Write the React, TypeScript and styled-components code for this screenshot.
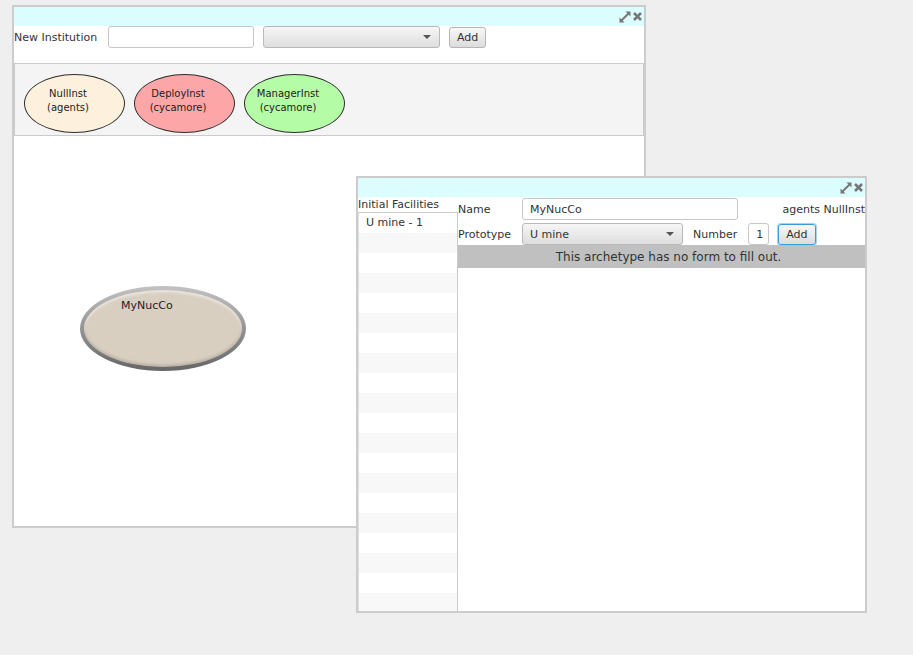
import styled, { createGlobalStyle } from "styled-components";

const GlobalStyle = createGlobalStyle`
  html, body {
    margin: 0;
    padding: 0;
    background: #efefef;
  }
  body {
    font-family: "DejaVu Sans", "Liberation Sans", sans-serif;
    font-size: 11px;
    color: #333;
  }
  * { box-sizing: border-box; }
`;

const Desktop = styled.div`
  position: relative;
  width: 913px;
  height: 655px;
  overflow: hidden;
`;

const Window = styled.div<{ $left: number; $top: number; $w: number; $h: number }>`
  position: absolute;
  left: ${(p) => p.$left}px;
  top: ${(p) => p.$top}px;
  width: ${(p) => p.$w}px;
  height: ${(p) => p.$h}px;
  border: 2px solid #cccccc;
  background: #ffffff;
  display: flex;
  flex-direction: column;
`;

const TitleBar = styled.div`
  height: 19px;
  flex: none;
  background: #dbfdfd;
  display: flex;
  justify-content: flex-end;
  align-items: center;
  gap: 1px;
  padding-right: 1px;
`;

const Toolbar = styled.div`
  display: flex;
  align-items: center;
  height: 22px;
  margin-bottom: 15px;
`;

const Label = styled.span<{ $w?: number }>`
  color: #333;
  white-space: nowrap;
  ${(p) => (p.$w ? `width: ${p.$w}px; flex: none;` : "")}
`;

const TextInput = styled.div<{ $w: number }>`
  width: ${(p) => p.$w}px;
  height: 22px;
  flex: none;
  border: 1px solid #c6c6c6;
  border-radius: 3px;
  background: #fff;
  padding: 0 7px;
  display: flex;
  align-items: center;
  color: #333;
`;

const Select = styled.div<{ $w: number }>`
  width: ${(p) => p.$w}px;
  height: 22px;
  flex: none;
  border: 1px solid #b9b9b9;
  border-radius: 3px;
  background: linear-gradient(#f6f6f6, #dedede);
  padding: 0 7px;
  display: flex;
  align-items: center;
  color: #333;
  &::after {
    content: "";
    margin-left: auto;
    border-left: 4px solid transparent;
    border-right: 4px solid transparent;
    border-top: 4px solid #555;
    margin-right: 1px;
  }
`;

const Button = styled.div<{ $focus?: boolean }>`
  height: 21px;
  padding: 0 7px;
  flex: none;
  border: 1px solid ${(p) => (p.$focus ? "#3c9ad6" : "#b5b5b5")};
  box-shadow: ${(p) => (p.$focus ? "0 0 0 1px #a6d3ef" : "none")};
  border-radius: 3px;
  background: linear-gradient(#f8f8f8, #dcdcdc);
  display: flex;
  align-items: center;
  color: #333;
`;

const Palette = styled.div`
  height: 73px;
  flex: none;
  background: #f4f4f4;
  border: 1px solid #cbcbcb;
  display: flex;
  gap: 9px;
  padding: 10px 0 0 9px;
`;

const Oval = styled.div<{ $bg: string }>`
  width: 101px;
  height: 59px;
  flex: none;
  border: 1px solid #2e2e2e;
  border-radius: 50%;
  background: ${(p) => p.$bg};
  display: flex;
  flex-direction: column;
  justify-content: center;
  align-items: center;
  padding: 0 13px 6px 0;
  font-size: 10px;
  line-height: 14px;
  color: #222;
  text-align: center;
`;

const Canvas = styled.div`
  flex: 1;
  position: relative;
`;

const NodeRing = styled.div<{ $x: number; $y: number }>`
  position: absolute;
  left: ${(p) => p.$x}px;
  top: ${(p) => p.$y}px;
  width: 166px;
  height: 85px;
  border-radius: 50%;
  background: linear-gradient(#c2c2c2, #666666);
  padding: 4px;
`;

const NodeFill = styled.div`
  width: 100%;
  height: 100%;
  border-radius: 50%;
  background: #d9cfc1;
  box-shadow: inset 0 2px 3px rgba(255, 255, 255, 0.5), inset 0 -2px 3px rgba(0, 0, 0, 0.15);
  padding: 9px 0 0 37px;
  color: #222;
`;

const Body = styled.div`
  flex: 1;
  display: flex;
  min-height: 0;
`;

const SideColumn = styled.div`
  width: 100px;
  flex: none;
  display: flex;
  flex-direction: column;
`;

const SideHeader = styled.div`
  height: 15px;
  line-height: 15px;
  color: #333;
  white-space: nowrap;
`;

const List = styled.div`
  flex: 1;
  border-top: 1px solid #cbcbcb;
  border-right: 1px solid #cbcbcb;
  border-left: 1px solid #e0e0e0;
  overflow: hidden;
`;

const ListRow = styled.div<{ $odd: boolean }>`
  height: 20px;
  line-height: 20px;
  padding-left: 7px;
  background: ${(p) => (p.$odd ? "#f8f8f8" : "#ffffff")};
  color: #333;
`;

const Editor = styled.div`
  flex: 1;
  display: flex;
  flex-direction: column;
  padding-top: 1px;
`;

const FormRow = styled.div<{ $gap?: number }>`
  display: flex;
  align-items: center;
  height: 22px;
  margin-bottom: ${(p) => p.$gap ?? 0}px;
`;

const Spacer = styled.div<{ $w?: number }>`
  ${(p) => (p.$w ? `width: ${p.$w}px; flex: none;` : "flex: 1;")}
`;

const NoticeBar = styled.div`
  height: 23px;
  background: #c0c0c0;
  display: flex;
  align-items: center;
  justify-content: center;
  padding-left: 14px;
  font-size: 12px;
  color: #333;
`;

const ExpandIcon = () => (
  <svg width="12" height="12" viewBox="0 0 12 12">
    <path d="M6.5 0.5 L11.5 0.5 L11.5 5.5 Z" fill="#777" />
    <path d="M0.5 6.5 L0.5 11.5 L5.5 11.5 Z" fill="#777" />
    <path d="M9.5 2.5 L2.5 9.5" stroke="#777" strokeWidth="2" />
  </svg>
);

const CloseIcon = () => (
  <svg width="11" height="11" viewBox="0 0 11 11">
    <path d="M2 2 L9 9 M9 2 L2 9" stroke="#777" strokeWidth="2.6" />
  </svg>
);

const Controls = () => (
  <>
    <ExpandIcon />
    <CloseIcon />
  </>
);

const institutions = [
  { name: "NullInst", lib: "(agents)", color: "#fdf0dc" },
  { name: "DeployInst", lib: "(cycamore)", color: "#fda6a8" },
  { name: "ManagerInst", lib: "(cycamore)", color: "#b4fca6" },
];

export default function App() {
  const rows = Array.from({ length: 20 }, (_, i) => i);
  return (
    <Desktop>
      <GlobalStyle />
      <Window $left={12} $top={5} $w={634} $h={523}>
        <TitleBar>
          <Controls />
        </TitleBar>
        <Toolbar>
          <Label $w={94}>New Institution</Label>
          <TextInput $w={146} />
          <Spacer $w={9} />
          <Select $w={177} />
          <Spacer $w={9} />
          <Button>Add</Button>
        </Toolbar>
        <Palette>
          {institutions.map((inst) => (
            <Oval key={inst.name} $bg={inst.color}>
              <span>{inst.name}</span>
              <span>{inst.lib}</span>
            </Oval>
          ))}
        </Palette>
        <Canvas>
          <NodeRing $x={66} $y={150}>
            <NodeFill>MyNucCo</NodeFill>
          </NodeRing>
        </Canvas>
      </Window>

      <Window $left={356} $top={176} $w={511} $h={437}>
        <TitleBar>
          <Controls />
        </TitleBar>
        <Body>
          <SideColumn>
            <SideHeader>Initial Facilities</SideHeader>
            <List>
              {rows.map((i) => (
                <ListRow key={i} $odd={i % 2 === 1}>
                  {i === 0 ? "U mine - 1" : ""}
                </ListRow>
              ))}
            </List>
          </SideColumn>
          <Editor>
            <FormRow $gap={3}>
              <Label $w={64}>Name</Label>
              <TextInput $w={216}>MyNucCo</TextInput>
              <Spacer />
              <Label>agents NullInst</Label>
            </FormRow>
            <FormRow>
              <Label $w={64}>Prototype</Label>
              <Select $w={161}>U mine</Select>
              <Spacer $w={10} />
              <Label>Number</Label>
              <Spacer $w={11} />
              <TextInput $w={21}>1</TextInput>
              <Spacer $w={9} />
              <Button $focus>Add</Button>
            </FormRow>
            <NoticeBar>This archetype has no form to fill out.</NoticeBar>
          </Editor>
        </Body>
      </Window>
    </Desktop>
  );
}
